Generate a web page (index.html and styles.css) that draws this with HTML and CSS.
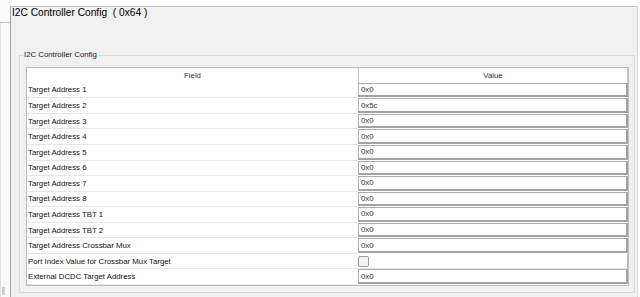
FILE: index.html
```html
<!DOCTYPE html>
<html>
<head>
<meta charset="utf-8">
<link rel="stylesheet" href="styles.css">
</head>
<body>
<div class="screen">
  <aside class="side">
    <div class="side-top"></div>
    <div class="side-body"><span class="thumb"></span></div>
  </aside>
  <main class="panel">
    <div class="title">I2C Controller Config&nbsp; ( 0x64 )</div>
    <fieldset class="group">
      <legend class="group-label">I2C Controller Config</legend>
      <div class="table">
        <div class="hcell field-h">Field</div>
        <div class="hcell value-h">Value</div>

        <div class="fcell">Target Address 1</div>
        <div class="vcell"><div class="input">0x0</div></div>
        <div class="fcell">Target Address 2</div>
        <div class="vcell"><div class="input">0x5c</div></div>
        <div class="fcell">Target Address 3</div>
        <div class="vcell"><div class="input">0x0</div></div>
        <div class="fcell">Target Address 4</div>
        <div class="vcell"><div class="input">0x0</div></div>
        <div class="fcell">Target Address 5</div>
        <div class="vcell"><div class="input">0x0</div></div>
        <div class="fcell">Target Address 6</div>
        <div class="vcell"><div class="input">0x0</div></div>
        <div class="fcell">Target Address 7</div>
        <div class="vcell"><div class="input">0x0</div></div>
        <div class="fcell">Target Address 8</div>
        <div class="vcell"><div class="input">0x0</div></div>
        <div class="fcell">Target Address TBT 1</div>
        <div class="vcell"><div class="input">0x0</div></div>
        <div class="fcell">Target Address TBT 2</div>
        <div class="vcell"><div class="input">0x0</div></div>
        <div class="fcell">Target Address Crossbar Mux</div>
        <div class="vcell"><div class="input">0x0</div></div>
        <div class="fcell">Port Index Value for Crossbar Mux Target</div>
        <div class="vcell check-cell"><span class="checkbox"></span></div>
        <div class="fcell">External DCDC Target Address</div>
        <div class="vcell"><div class="input">0x0</div></div>
      </div>
    </fieldset>
  </main>
</div>
</body>
</html>
```
FILE: styles.css
```css
html, body {
  margin: 0;
  padding: 0;
  background: #ffffff;
  font-family: "Liberation Sans", Arial, sans-serif;
}

.screen {
  display: flex;
  height: 297px;
  overflow: hidden;
}

.side {
  width: 10px;
  display: flex;
  flex-direction: column;
  flex-shrink: 0;
}

.side-top {
  height: 22px;
  background: #fbfbfb;
  border-bottom: 1px solid #c9c9c9;
}

.side-body {
  flex: 1;
  background: #f9f9f9;
  border-left: 1px solid #e2e2e2;
  display: flex;
  flex-direction: column;
  justify-content: flex-end;
  padding-bottom: 2px;
}

.thumb {
  display: block;
  width: 3px;
  height: 8px;
  margin-left: 1px;
  background: #cfcfcf;
}

.panel {
  flex: 1;
  margin-top: 6px;
  margin-right: 2px;
  padding-left: 1px;
  background: #f0f0f0;
  border-top: 1px solid #c4c4cc;
  border-left: 1px solid #a9a9a9;
  border-right: 1px solid #dadada;
  display: flex;
  flex-direction: column;
}

.title {
  height: 12px;
  font-size: 10.2px;
  line-height: 12px;
  color: #000;
  white-space: pre;
}

.group {
  margin: 31px 2px 0 7px;
  padding: 0;
  border: 1px solid #d9d9d9;
  min-width: 0;
}

.group-label {
  margin-left: 3px;
  padding: 0 1px;
  font-size: 7.8px;
  line-height: 10px;
  color: #1a1a1a;
}

.table {
  margin: 7px 5px 6px 6px;
  display: grid;
  grid-template-columns: 331px 270px;
  grid-template-rows: 14.7px repeat(13, 15.57px);
  background: #ffffff;
  border: 1px solid #bdbdbd;
  font-size: 7.8px;
  color: #111;
}

.hcell {
  display: flex;
  align-items: center;
  justify-content: center;
  color: #333;
}

.value-h {
  border-left: 1px solid #c6c6c6;
  border-right: 1px solid #c6c6c6;
}

.fcell {
  display: flex;
  align-items: center;
  padding-left: 1px;
  border-bottom: 1px solid #e6e6e6;
  white-space: nowrap;
}

.vcell {
  display: flex;
  padding-bottom: 1px;
}

.input {
  flex: 1;
  display: flex;
  align-items: center;
  padding-left: 2px;
  background: #fff;
  border: 1px solid #ababab;
  border-right: 2px solid #a2a2a2;
  border-bottom: 2px solid #a2a2a2;
  color: #333;
}

.check-cell {
  align-items: flex-start;
  border-right: 1px solid #b5b5b5;
  border-bottom: 1px solid #e6e6e6;
}

.checkbox {
  display: block;
  width: 11px;
  height: 11px;
  margin-top: 2px;
  box-sizing: border-box;
  border: 1px solid #9a9a9a;
  border-radius: 2px;
  background: #f3f3f3;
}
```
